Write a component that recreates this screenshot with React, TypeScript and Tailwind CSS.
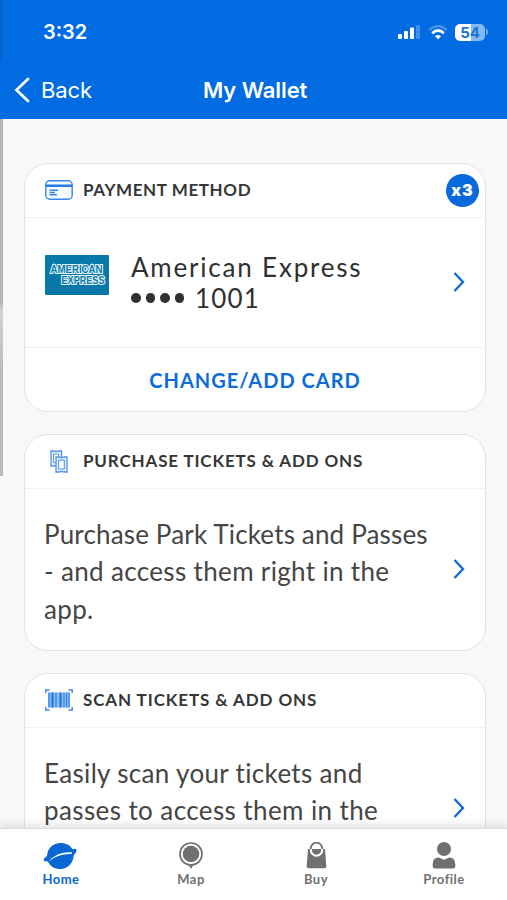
import type { ReactNode } from "react";

function Chevron() {
  return (
    <svg className="mb-[2px] h-5 w-3 shrink-0" viewBox="0 0 12 20" fill="none">
      <path d="M1.5 1L10 10L1.5 19" stroke="#0b6bd8" strokeWidth="2.3" />
    </svg>
  );
}

function Card({ className, icon, title, badge, children }: { className: string; icon: ReactNode; title: ReactNode; badge?: ReactNode; children: ReactNode }) {
  return (
    <section className={"flex shrink-0 flex-col overflow-hidden rounded-[24px] border-[1.5px] border-[#e3e3e4] bg-white " + className}>
      <header className="flex h-[54px] shrink-0 items-center border-b-[1.5px] border-[#f0f0f1] pb-px pl-5 pr-[6px]">
        <div className="flex w-[38px] shrink-0">{icon}</div>
        <h2 className="grow whitespace-nowrap text-[17px] font-bold text-[#363637]">{title}</h2>
        {badge}
      </header>
      {children}
    </section>
  );
}

function CardIcon() {
  return (
    <svg className="h-5 w-7" viewBox="0 0 28 20" fill="none" stroke="#3987e6" strokeWidth="1.4">
      <rect x=".8" y=".8" width="26.4" height="18.4" rx="4" fill="#f5faff" />
      <path d="M1 5.7H27" stroke="#237be5" strokeWidth="2.4" />
      <path d="M4.5 10.3H13M4.5 12.5H10M4.5 14.7H12" strokeWidth="1.4" />
    </svg>
  );
}

function TicketsIcon() {
  return (
    <svg className="ml-[5px] h-[23px] w-[18px]" viewBox="0 0 18 23" fill="#e3f0ff" stroke="#4b91e8" strokeWidth="1.3">
      <path d="M1 1H4Q6.2 2 8.5 1H11.5V16H8Q6.3 15.2 4.5 16H1Z" />
      <path d="M3.5 4H8.5V12.5H3.5Z" fill="white" strokeWidth=".9" />
      <path d="M6 7H9Q11.5 8 14 7H17V22H14Q11.5 21 9 22H6Z" />
      <path d="M8.7 10H14.3V19H8.7Z" fill="white" strokeWidth="1" />
    </svg>
  );
}

function BarcodeIcon() {
  return (
    <svg className="h-[22px] w-7" viewBox="0 0 28 22" fill="none" stroke="#3d8be8">
      <path d="M.8 4V1H4.5M23.5 1H27.2V4M.8 18V21H4.5M23.5 21H27.2V18" strokeWidth="1.5" />
      <path d="M3 3.5H25V18.5H3Z" fill="#8dbcf5" stroke="none" />
      <path d="M4 3.5V18.5M11 3.5V18.5M19 3.5V18.5M24 3.5V18.5" strokeWidth="1.4" />
      <path d="M7.5 3.5V18.5M15.5 3.5V18.5" stroke="#1975e1" strokeWidth="2.1" />
      <path d="M21.5 3.5V18.5" stroke="#287fe4" />
    </svg>
  );
}

function AmexLogo() {
  return (
    <svg className="h-[40px] w-16 shrink-0 rounded-[1px] bg-[#0878a8] font-['Liberation_Sans',sans-serif]" viewBox="0 0 64 40">
      <g fill="#0878a8" stroke="#e6f5fa" strokeWidth="2.2" paintOrder="stroke" fontSize="10" fontWeight="bold">
        <text x="5.5" y="17.5" textLength="52" lengthAdjust="spacingAndGlyphs">AMERICAN</text>
        <text x="16.5" y="29" textLength="43" lengthAdjust="spacingAndGlyphs">EXPRESS</text>
      </g>
    </svg>
  );
}

function Tab({ className, label, children }: { className: string; label: string; children: ReactNode }) {
  return (
    <div className={"flex shrink-0 flex-col items-center pt-[13px] text-[13px] font-bold leading-4 " + className}>
      <div className="flex h-[29px] items-start justify-center">{children}</div>
      <span className="whitespace-nowrap tracking-[0.5px]">{label}</span>
    </div>
  );
}

export default function App() {
  return (
    <div className="relative flex h-[900px] w-[507px] flex-col overflow-hidden bg-[#f8f8f8] font-[Lato,sans-serif]">
      <div className="h-[119px] shrink-0 bg-[#016be1] font-[Inter,sans-serif] text-white">
        <div className="flex h-[62px] items-center justify-between pl-[43px] pr-[19px] pt-[2px]">
          <span className="text-[20px] font-semibold">3:32</span>
          <div className="flex items-center">
            <svg className="h-4 w-6" viewBox="0 0 24 16" fill="white">
              <rect x="1" y="10" width="4" height="5" rx="1" />
              <rect x="7" y="7" width="4" height="8" rx="1" />
              <rect x="13" y="3.5" width="4" height="11.5" rx="1" />
              <rect x="19" y="1" width="4" height="14" rx="1" opacity=".25" />
            </svg>
            <svg className="ml-[7px] h-[15px] w-5" viewBox="0 0 20 15" fill="none" stroke="white">
              <path d="M1.2 5Q10-3 18.8 5" strokeWidth="2.5" opacity=".28" />
              <path d="M4.2 8.2Q10 2.8 15.8 8.2" strokeWidth="2.7" />
              <path d="M7 11.3Q10 8.5 13 11.3L10 14.3Z" fill="white" stroke="none" />
            </svg>
            <div className="ml-[7px] flex h-[17px] w-[30px] items-center justify-center rounded-[5px] bg-linear-to-r from-white from-54% to-[#82b9f5] to-54% text-[15px] font-bold leading-none text-[#1d72d2]">54</div>
            <div className="ml-px h-[6px] w-[2px] rounded-r-full bg-[#72adf0]" />
          </div>
        </div>
        <div className="flex h-14 items-center">
          <svg className="ml-[14px] h-[26px] w-4" viewBox="0 0 16 26" fill="none">
            <path d="M14 2L2.5 13L14 24" stroke="white" strokeWidth="2.8" strokeLinecap="round" />
          </svg>
          <span className="ml-[11px] w-[162px] text-[22px] tracking-[-0.1px]">Back</span>
          <h1 className="whitespace-nowrap text-[22px] font-semibold tracking-[-0.1px]">My Wallet</h1>
        </div>
      </div>

      <main className="flex h-[709px] shrink-0 flex-col gap-[22px] overflow-hidden pl-[24px] pr-[21px] pt-[44px]">
        <Card className="h-[249px]" icon={<CardIcon />} title={<span className="tracking-[0.6px]">PAYMENT METHOD</span>}
          badge={<span className="flex size-[33px] items-center justify-center rounded-full bg-[#0769dc] font-[Inter,sans-serif] text-[16px] font-black tracking-[1px] text-white">x3</span>}>
          <div className="flex h-[130px] items-center border-b-[1.5px] border-[#f0f0f1] pl-5 pr-5">
            <div className="mb-4"><AmexLogo /></div>
            <div className="ml-[22px] grow text-[26px] leading-[31px] text-[#303031]">
              <div className="whitespace-nowrap tracking-[1.8px]">American Express</div>
              <div className="flex items-center">
                <span className="flex gap-[5px]">
                  {[0, 1, 2, 3].map((dot) => <i key={dot} className="size-[9.5px] rounded-full bg-[#303031]" />)}
                </span>
                <span className="ml-[11px] tracking-[1.2px]">1001</span>
              </div>
            </div>
            <Chevron />
          </div>
          <div className="flex grow items-center justify-center text-[20px] font-bold tracking-[1px] text-[#0b6bd8]">CHANGE/ADD CARD</div>
        </Card>

        <Card className="h-[217px]" icon={<TicketsIcon />} title={<span className="tracking-[0.85px]">PURCHASE TICKETS &amp; ADD ONS</span>}>
          <div className="flex grow items-center justify-between pl-[19px] pr-5 text-[26px] leading-[37.5px] text-[#454546]">
            <p className="whitespace-nowrap pt-[5px]">
              <span className="block tracking-[0.16px]">Purchase Park Tickets and Passes</span>
              <span className="block tracking-[0.34px]">- and access them right in the</span>
              <span className="block tracking-[0.34px]">app.</span>
            </p>
            <Chevron />
          </div>
        </Card>

        <Card className="h-[217px]" icon={<BarcodeIcon />} title={<span className="tracking-[0.9px]">SCAN TICKETS &amp; ADD ONS</span>}>
          <div className="flex grow items-center justify-between pl-[19px] pr-5 text-[26px] leading-[37.5px] text-[#454546]">
            <p className="whitespace-nowrap pb-[33px]">
              <span className="block tracking-[0.34px]">Easily scan your tickets and</span>
              <span className="block tracking-[0.4px]">passes to access them in the</span>
            </p>
            <Chevron />
          </div>
        </Card>
      </main>

      <nav className="z-10 flex h-[72px] shrink-0 overflow-hidden border-t-[1.5px] border-[#dddddd] bg-white text-[#707071] shadow-[0_-3px_9px_rgba(0,0,0,0.12)]">
        <Tab className="w-[122px] text-[#0967d4]" label="Home">
          <svg className="mr-[2px] h-7 w-[34px]" viewBox="0 0 34 28" fill="#0967d4">
            <path d="M4 14C4.5 6 10.5 1 17.5 1C23 1 27.5 3.3 29.5 7.3L32.3 6.8Q34.2 7 33 10.2L30.8 13.2C30 21.5 24.5 27 17.5 27C12 27 7 24.5 5 19.5L1.5 19.3Q-.2 18.5 1.5 16Z" />
            <path d="M5.7 19.5Q13.5 9.5 29 10.2L28.5 12Q14.5 11.5 5.7 19.5Z" fill="white" />
          </svg>
        </Tab>
        <Tab className="w-[138px]" label="Map">
          <svg className="h-7 w-6" viewBox="0 0 24 28" fill="none">
            <circle cx="12" cy="12" r="11" stroke="#707071" strokeWidth="1.7" />
            <circle cx="12" cy="12" r="8.3" fill="#707071" />
            <path d="M9.5 22.5H14.5L12 27Z" fill="#707071" />
          </svg>
        </Tab>
        <Tab className="w-[112px]" label="Buy">
          <svg className="h-7 w-[21px]" viewBox="0 0 21 28" fill="none">
            <path d="M2 7H19L20.3 24Q20.5 26.2 18 26.2H3Q.5 26.2 .7 24Z" fill="#707071" />
            <circle cx="10.5" cy="8" r="5.7" stroke="white" strokeWidth="2" />
            <path d="M4.8 7V6.3A5.7 5.7 0 0 1 16.2 6.3V7" stroke="#707071" strokeWidth="1.8" />
            <path d="M7 7.5H14Q14 11.5 10.5 11.5T7 7.5Z" fill="#707071" />
          </svg>
        </Tab>
        <Tab className="w-[144px]" label="Profile">
          <svg className="h-7 w-6" viewBox="0 0 24 28" fill="#707071">
            <circle cx="12" cy="7" r="7" />
            <path d="M.7 22.5Q.7 15.5 6.5 15.5Q8 15.5 9 16.5Q12 18.5 15 16.5Q16 15.5 17.5 15.5Q23.3 15.5 23.3 22.5V24.5Q23.3 26.5 21 26.5H3Q.7 26.5 .7 24.5Z" />
          </svg>
        </Tab>
      </nav>

      <div className="absolute left-0 top-0 h-[61px] w-[2px] bg-[#0660c9]" />
      <div className="absolute left-0 top-[119px] h-[357px] w-[3px] bg-linear-to-b from-[#b5b5b5] from-51% via-[#d6d2d3] via-54% to-[#b9b8b9] to-72%" />
    </div>
  );
}
